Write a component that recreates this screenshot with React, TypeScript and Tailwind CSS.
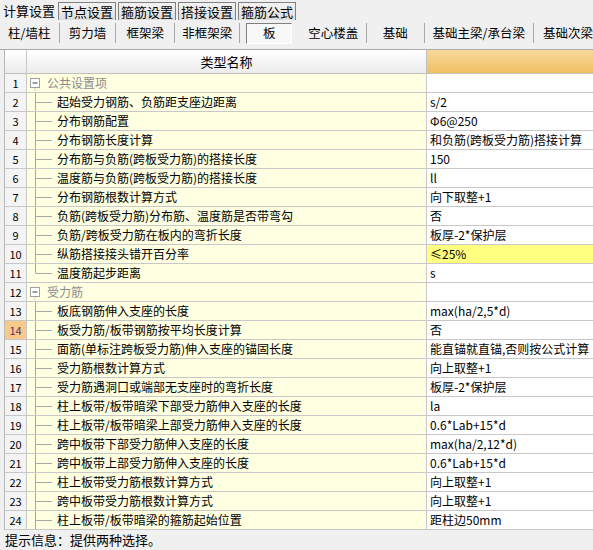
import React from "react";

type Row = { name: string; value: string; group?: boolean; last?: boolean };

const rows: Row[] = [
  { name: "公共设置项", value: "", group: true },
  { name: "起始受力钢筋、负筋距支座边距离", value: "s/2" },
  { name: "分布钢筋配置", value: "Φ6@250" },
  { name: "分布钢筋长度计算", value: "和负筋(跨板受力筋)搭接计算" },
  { name: "分布筋与负筋(跨板受力筋)的搭接长度", value: "150" },
  { name: "温度筋与负筋(跨板受力筋)的搭接长度", value: "ll" },
  { name: "分布钢筋根数计算方式", value: "向下取整+1" },
  { name: "负筋(跨板受力筋)分布筋、温度筋是否带弯勾", value: "否" },
  { name: "负筋/跨板受力筋在板内的弯折长度", value: "板厚-2*保护层" },
  { name: "纵筋搭接接头错开百分率", value: "≤25%" },
  { name: "温度筋起步距离", value: "s", last: true },
  { name: "受力筋", value: "", group: true },
  { name: "板底钢筋伸入支座的长度", value: "max(ha/2,5*d)" },
  { name: "板受力筋/板带钢筋按平均长度计算", value: "否" },
  { name: "面筋(单标注跨板受力筋)伸入支座的锚固长度", value: "能直锚就直锚,否则按公式计算" },
  { name: "受力筋根数计算方式", value: "向上取整+1" },
  { name: "受力筋遇洞口或端部无支座时的弯折长度", value: "板厚-2*保护层" },
  { name: "柱上板带/板带暗梁下部受力筋伸入支座的长度", value: "la" },
  { name: "柱上板带/板带暗梁上部受力筋伸入支座的长度", value: "0.6*Lab+15*d" },
  { name: "跨中板带下部受力筋伸入支座的长度", value: "max(ha/2,12*d)" },
  { name: "跨中板带上部受力筋伸入支座的长度", value: "0.6*Lab+15*d" },
  { name: "柱上板带受力筋根数计算方式", value: "向上取整+1" },
  { name: "跨中板带受力筋根数计算方式", value: "向上取整+1" },
  { name: "柱上板带/板带暗梁的箍筋起始位置", value: "距柱边50mm" },
];

const tabs = ["节点设置", "箍筋设置", "搭接设置", "箍筋公式"];

function Sep() {
  return <div className="w-px h-[20px] bg-[#a8a8a8] shrink-0" />;
}

function Tree({ row }: { row: Row }) {
  if (row.group) {
    return (
      <svg width="20" height="18" className="shrink-0">
        <rect x="3.5" y="4.5" width="9" height="9" fill="#fff" stroke="#a0a0a0" />
        <line x1="5.5" y1="9" x2="10.5" y2="9" stroke="#404040" />
        <line x1="8" y1="14" x2="8" y2="18" stroke="#b0b0b0" strokeDasharray="1 1" />
      </svg>
    );
  }
  return (
    <svg width="30" height="18" className="shrink-0">
      <line x1="8.5" y1="0" x2="8.5" y2={row.last ? 9 : 18} stroke="#a8a8a8" />
      <line x1="8.5" y1="9.5" x2="25" y2="9.5" stroke="#a8a8a8" />
    </svg>
  );
}

export default function App() {
  return (
    <div
      className="w-[593px] h-[550px] bg-[#f0f0f0] overflow-hidden flex flex-col text-[12px] text-black whitespace-nowrap"
      style={{ fontFamily: '"Noto Sans CJK SC", "Liberation Sans", sans-serif' }}
    >
      {/* tabs */}
      <div className="h-[20px] flex items-end shrink-0 text-[13px] leading-none">
        <div className="w-[58px] h-[20px] pl-[3px] flex items-center bg-[#f0f0f0]">计算设置</div>
        {tabs.map((t) => (
          <div
            key={t}
            className="w-[58px] h-[18px] mr-[2px] flex items-center justify-center border border-[#808080] border-b-0 bg-gradient-to-b from-[#f4f4f4] to-[#dcdcdc]"
          >
            {t}
          </div>
        ))}
      </div>

      {/* toolbar */}
      <div className="h-[26px] flex items-center shrink-0 text-[12.5px] leading-none">
        <div className="w-[60px] text-center">柱/墙柱</div>
        <Sep />
        <div className="w-[57px] text-center">剪力墙</div>
        <Sep />
        <div className="w-[59px] text-center">框架梁</div>
        <Sep />
        <div className="w-[66px] text-center">非框架梁</div>
        <Sep />
        <div className="w-[53px] flex justify-end">
          <div className="w-[46px] h-[21px] flex items-center justify-center border border-t-[#808080] border-l-[#808080] border-b-white border-r-white bg-[#f8f8f8]">
            板
          </div>
        </div>
        <div className="w-[75px] pl-[16px]">空心楼盖</div>
        <Sep />
        <div className="w-[58px] text-center">基础</div>
        <Sep />
        <div className="w-[111px] text-center">基础主梁/承台梁</div>
        <Sep />
        <div className="pl-[9px]">基础次梁</div>
      </div>

      {/* grid */}
      <div className="mt-[3px] border-t border-[#a8a8a8] pl-[4px] shrink-0">
        <div className="border-l border-[#b8b8b8]">
          <div className="flex h-[24px] border-b border-[#c0c0c0]">
            <div className="w-[22px] border-r border-[#c8c8c8] bg-gradient-to-b from-white to-[#ececec]" />
            <div className="w-[400px] flex items-center justify-center border-r border-[#c0c0c0] bg-gradient-to-b from-white to-[#ececec] text-[13px]">
              类型名称
            </div>
            <div className="flex-1 bg-gradient-to-b from-[#f9d99d] to-[#f0c062]" />
          </div>
          {rows.map((r, i) => (
            <div key={i} className="flex h-[19px] border-b border-[#c8c8c8] leading-none">
              <div
                className={
                  "w-[22px] shrink-0 flex items-center justify-center border-r border-[#c8c8c8] text-[11px] " +
                  (i === 13 ? "bg-[#f7c98a] text-[#5a2d6a]" : "bg-[#f4f4f4]")
                }
              >
                {i + 1}
              </div>
              <div className="w-[400px] shrink-0 flex items-center bg-[#ffffe1] border-r border-[#c8c8c8] overflow-hidden">
                <Tree row={r} />
                <span className={r.group ? "text-[#8c8c8c] text-[12px]" : "text-[12px]"}>{r.name}</span>
              </div>
              <div
                className={
                  "flex-1 flex items-center pl-[3px] overflow-hidden text-[12px] " +
                  (i === 9 ? "bg-[#ffff80]" : "bg-white")
                }
              >
                {r.value}
              </div>
            </div>
          ))}
        </div>
      </div>

      {/* status */}
      <div className="pl-[5px] pt-[1px] text-[13px] leading-[18px]">提示信息：提供两种选择。</div>
    </div>
  );
}
